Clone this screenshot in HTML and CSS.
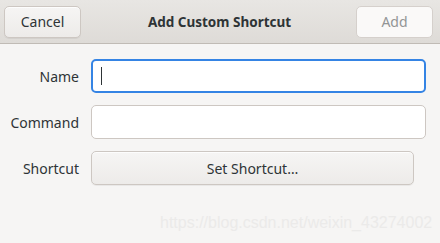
FILE: index.html
```html
<!DOCTYPE html>
<html lang="en">
<head>
    <meta charset="UTF-8">
    <title>Add Custom Shortcut</title>
    <link rel="stylesheet" href="styles.css">
</head>
<body>
    <div class="dialog">
        <div class="headerbar">
            <button class="btn cancel">Cancel</button>
            <span class="title">Add Custom Shortcut</span>
            <button class="btn add" disabled>Add</button>
        </div>
        <div class="content">
            <label class="label">Name</label>
            <div class="entry focused"><span class="caret"></span></div>

            <label class="label">Command</label>
            <div class="entry"></div>

            <label class="label">Shortcut</label>
            <button class="btn shortcut">Set Shortcut…</button>
        </div>
        <div class="watermark">https://blog.csdn.net/weixin_43274002</div>
    </div>
</body>
</html>
```

FILE: styles.css
```css
body {
    margin: 0;
    font-family: 'Noto Sans', sans-serif;
    font-size: 14px;
    color: #2e3436;
    background: #f6f5f4;
}
.dialog {
    position: relative;
    width: 440px;
    height: 243px;
    overflow: hidden;
}
.headerbar {
    height: 43px;
    display: flex;
    align-items: center;
    justify-content: space-between;
    padding: 0 7px 0 4px;
    background: linear-gradient(to bottom, #e8e6e3, #dedbd7);
    border-bottom: 1px solid #c0bbb5;
    box-sizing: content-box;
}
.title {
    font-weight: bold;
    font-size: 13.5px;
    margin-left: 2px;
}
.btn {
    font-family: inherit;
    font-size: 14px;
    color: #2e3436;
    height: 32px;
    border: 1px solid #cdc7c2;
    border-radius: 5px;
    background: linear-gradient(to bottom, #f6f5f4, #edebe9);
    box-shadow: inset 0 1px rgba(255, 255, 255, 0.8), 0 1px rgba(0, 0, 0, 0.05);
    padding: 0;
}
.cancel {
    width: 77px;
}
.add {
    width: 77px;
    color: #929595;
    background: #faf9f8;
    border-color: #d5d0cc;
    box-shadow: none;
}
.content {
    display: grid;
    grid-template-columns: 79px 1fr;
    column-gap: 12px;
    row-gap: 12px;
    padding: 15px 14px 0 0;
}
.label {
    text-align: right;
    align-self: center;
    color: #2e3436;
}
.entry {
    height: 34px;
    box-sizing: border-box;
    border: 1px solid #cdc7c2;
    border-radius: 5px;
    background: #ffffff;
    display: flex;
    align-items: center;
    padding-left: 9px;
}
.entry.focused {
    border: 2px solid #3584e4;
    padding-left: 8px;
}
.caret {
    width: 1px;
    height: 18px;
    background: #2e3436;
}
.shortcut {
    width: 323px;
    height: 34px;
}
.watermark {
    position: absolute;
    left: 160px;
    top: 214px;
    font-family: 'Liberation Sans', sans-serif;
    font-size: 16px;
    color: #ebeae9;
}
```
